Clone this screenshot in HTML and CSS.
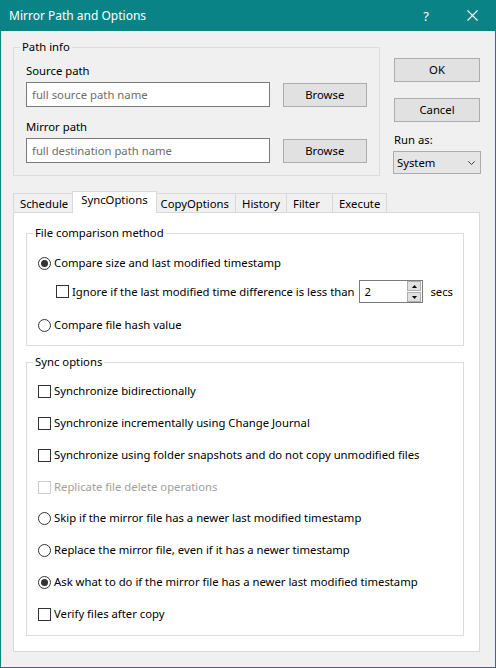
FILE: index.html
```html
<!DOCTYPE html>
<html>
<head>
<meta charset="utf-8">
<title>Mirror Path and Options</title>
<link rel="stylesheet" href="styles.css">
</head>
<body>
<div class="window">
  <div class="titlebar">
    <span class="title">Mirror Path and Options</span>
    <span class="caption-btn help">?</span>
    <span class="caption-btn close">
      <svg width="11" height="11" viewBox="0 0 11 11"><path d="M0.5 0.5L10.5 10.5M10.5 0.5L0.5 10.5" stroke="#fff" stroke-width="1.1" fill="none"/></svg>
    </span>
  </div>
  <div class="content">
    <div class="top">
      <fieldset class="group path-info">
        <legend>Path info</legend>
        <div class="field-label">Source path</div>
        <div class="path-row">
          <div class="textbox placeholder">full source path name</div>
          <div class="btn browse">Browse</div>
        </div>
        <div class="field-label second">Mirror path</div>
        <div class="path-row">
          <div class="textbox placeholder">full destination path name</div>
          <div class="btn browse">Browse</div>
        </div>
      </fieldset>
      <div class="side">
        <div class="btn ok">OK</div>
        <div class="btn cancel">Cancel</div>
        <div class="runas-label">Run as:</div>
        <div class="select">
          <span>System</span>
          <svg width="7" height="4" viewBox="0 0 7 4"><path d="M0.3 0.3L3.5 3.5L6.7 0.3" stroke="#404040" stroke-width="1" fill="none"/></svg>
        </div>
      </div>
    </div>

    <div class="tabs">
      <div class="tab">Schedule</div>
      <div class="tab selected">SyncOptions</div>
      <div class="tab">CopyOptions</div>
      <div class="tab">History</div>
      <div class="tab">Filter</div>
      <div class="tab">Execute</div>
    </div>

    <div class="panel">
      <fieldset class="group cmp">
        <legend>File comparison method</legend>
        <div class="row">
          <span class="radio checked"></span>
          <span class="label">Compare size and last modified timestamp</span>
        </div>
        <div class="row spin-row">
          <span class="check"></span>
          <span class="label">Ignore if the last modified time difference is less than</span>
          <div class="spinner">
            <span class="spin-value">2</span>
            <div class="spin-btns">
              <div class="spin-btn"><svg width="5" height="3" viewBox="0 0 5 3"><path d="M2.5 0L5 3H0Z" fill="#000"/></svg></div>
              <div class="spin-btn"><svg width="5" height="3" viewBox="0 0 5 3"><path d="M0 0H5L2.5 3Z" fill="#000"/></svg></div>
            </div>
          </div>
          <span class="secs">secs</span>
        </div>
        <div class="row last">
          <span class="radio"></span>
          <span class="label">Compare file hash value</span>
        </div>
      </fieldset>

      <fieldset class="group sync">
        <legend>Sync options</legend>
        <div class="row"><span class="check"></span><span class="label">Synchronize bidirectionally</span></div>
        <div class="row"><span class="check"></span><span class="label">Synchronize incrementally using Change Journal</span></div>
        <div class="row"><span class="check"></span><span class="label">Synchronize using folder snapshots and do not copy unmodified files</span></div>
        <div class="row disabled"><span class="check"></span><span class="label">Replicate file delete operations</span></div>
        <div class="row tight"><span class="radio"></span><span class="label">Skip if the mirror file has a newer last modified timestamp</span></div>
        <div class="row"><span class="radio"></span><span class="label">Replace the mirror file, even if it has a newer timestamp</span></div>
        <div class="row"><span class="radio checked"></span><span class="label">Ask what to do if the mirror file has a newer last modified timestamp</span></div>
        <div class="row"><span class="check"></span><span class="label">Verify files after copy</span></div>
      </fieldset>
    </div>
  </div>
</div>
</body>
</html>
```

FILE: styles.css
```css
* {
  box-sizing: border-box;
}

html, body {
  margin: 0;
  padding: 0;
}

body {
  width: 496px;
  height: 668px;
  font-family: "Noto Sans", "Open Sans", sans-serif;
  font-size: 11.3px;
  line-height: 16px;
  color: #000;
  background: #f0f0f0;
}

.window {
  width: 496px;
  height: 668px;
  border: 1px solid #0a8387;
  border-top: 0;
  background: #f0f0f0;
  display: flex;
  flex-direction: column;
}

.titlebar {
  height: 31px;
  flex: none;
  background: #0a8387;
  color: #fff;
  display: flex;
  align-items: center;
  padding-left: 8px;
}

.title {
  flex: 1;
  font-size: 12px;
}

.caption-btn {
  width: 46px;
  height: 31px;
  display: flex;
  align-items: center;
  justify-content: center;
}

.help {
  font-size: 13px;
}

.content {
  flex: 1;
  display: flex;
  flex-direction: column;
  padding: 8px 15px 15px 12px;
}

.top {
  display: flex;
  align-items: flex-start;
}

fieldset.group {
  margin: 0;
  border: 1px solid #dcdcdc;
  min-width: 0;
}

fieldset.group legend {
  padding: 0 2px;
  line-height: 16px;
}

fieldset.path-info {
  width: 369px;
  padding: 8px 12px 12px 12px;
}

fieldset.path-info legend {
  margin-left: -6px;
}

.field-label {
  height: 16px;
}

.field-label.second {
  margin-top: 12px;
}

.path-row {
  display: flex;
  align-items: flex-start;
  margin-top: 3px;
}

.textbox {
  width: 245px;
  height: 25px;
  border: 1px solid #7a7a7a;
  background: #fff;
  padding-left: 5px;
  display: flex;
  align-items: center;
}

.placeholder {
  color: #6d6d6d;
}

.btn {
  height: 24px;
  border: 1px solid #adadad;
  background: #e1e1e1;
  display: flex;
  align-items: center;
  justify-content: center;
}

.browse {
  width: 85px;
  margin-left: 13px;
  margin-top: 1px;
}

.side {
  width: 86px;
  margin-left: 14px;
  display: flex;
  flex-direction: column;
}

.ok {
  margin-top: 19px;
}

.cancel {
  margin-top: 16px;
}

.runas-label {
  margin-top: 10px;
  height: 16px;
}

.select {
  margin-top: 3px;
  margin-left: -1px;
  width: 88px;
  height: 23px;
  border: 1px solid #adadad;
  background: #e5e5e5;
  display: flex;
  align-items: center;
  justify-content: space-between;
  padding: 0 5px 0 3px;
}

.tabs {
  display: flex;
  align-items: flex-end;
  margin-top: 15px;
  margin-bottom: -1px;
  height: 22px;
}

.tab {
  height: 20px;
  min-width: 47px;
  padding: 1px 6px 0 6px;
  border: 1px solid #d9d9d9;
  border-bottom: 0;
  background: #f0f0f0;
  margin-left: -1px;
  line-height: 17px;
}

.tab:first-child {
  margin-left: 0;
}

.tab.selected {
  position: relative;
  z-index: 1;
  height: 22px;
  background: #fff;
  margin-left: -3px;
  margin-right: -2px;
  padding: 0 8px 0 8px;
  line-height: 16px;
}

.panel {
  flex: 1;
  background: #fff;
  border: 1px solid #d9d9d9;
  padding: 12px 15px 15px 12px;
  display: flex;
  flex-direction: column;
}

fieldset.cmp {
  padding: 12px 10px 10px 11px;
}

fieldset.cmp legend,
fieldset.sync legend {
  margin-left: -5px;
}

fieldset.sync {
  margin-top: 8px;
  padding: 11px 10px 11px 11px;
  display: flex;
  flex-direction: column;
  gap: 12px;
}

.row {
  display: flex;
  align-items: center;
  height: 20px;
  white-space: nowrap;
}

.sync .row.tight {
  margin-top: -1px;
}

.cmp .spin-row {
  height: 23px;
  margin-top: 7px;
  padding-left: 18px;
}

.cmp .row.last {
  margin-top: 12px;
}

.radio {
  width: 13px;
  height: 13px;
  border: 1px solid #333;
  border-radius: 50%;
  background: #fff;
  flex: none;
  margin-right: 3px;
  display: flex;
  align-items: center;
  justify-content: center;
}

.radio.checked::after {
  content: "";
  width: 7px;
  height: 7px;
  border-radius: 50%;
  background: #333;
}

.check {
  width: 13px;
  height: 13px;
  border: 1px solid #333;
  background: #fff;
  flex: none;
  margin-right: 3px;
}

.disabled .check {
  border-color: #cccccc;
}

.disabled .label {
  color: #a0a0a0;
}

.spinner {
  width: 72px;
  height: 23px;
  margin-left: 4px;
  border: 1px solid #7a7a7a;
  background: #fff;
  display: flex;
  align-items: center;
  justify-content: space-between;
  padding-left: 5px;
  padding-right: 1px;
}

.spin-btns {
  display: flex;
  flex-direction: column;
  height: 21px;
}

.spin-btn {
  width: 14px;
  height: 10px;
  border: 1px solid #adadad;
  background: #e1e1e1;
  display: flex;
  align-items: center;
  justify-content: center;
}

.spin-btn + .spin-btn {
  margin-top: 1px;
}

.secs {
  margin-left: 7px;
}
```
